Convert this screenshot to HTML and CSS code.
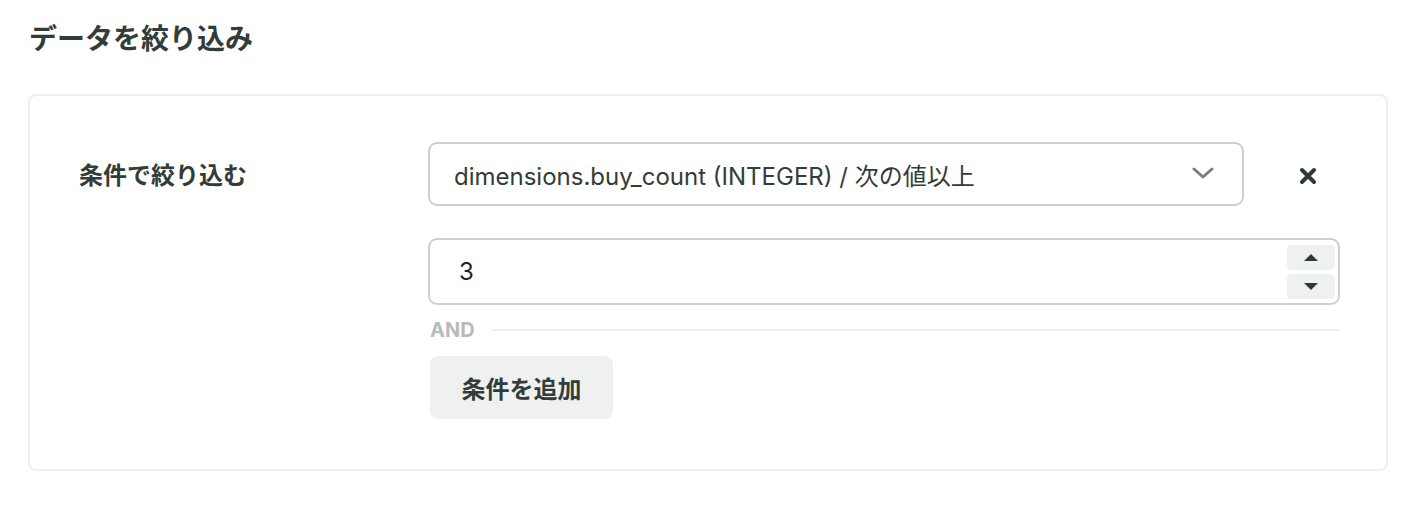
FILE: index.html
```html
<!DOCTYPE html>
<html lang="ja">
<head>
<meta charset="utf-8">
<title>データを絞り込み</title>
<link rel="stylesheet" href="styles.css">
</head>
<body>
<main class="page">
  <h1 class="title">データを絞り込み</h1>
  <section class="card">
    <div class="label">条件で絞り込む</div>
    <div class="content">
      <div class="select-row">
        <div class="select">
          <span class="select-text">dimensions.buy_count (INTEGER) / 次の値以上</span>
          <svg class="chevron" width="22" height="14" viewBox="0 0 22 14"><path d="M2 3 L11 11 L20 3" fill="none" stroke="#7a7f7d" stroke-width="3" stroke-linecap="round" stroke-linejoin="round"/></svg>
        </div>
        <button class="remove" aria-label="削除">
          <svg width="18" height="18" viewBox="0 0 18 18"><path d="M3 3 L15 15 M15 3 L3 15" stroke="#2f3a37" stroke-width="4" stroke-linecap="round"/></svg>
        </button>
      </div>
      <div class="number">
        <span class="number-value">3</span>
        <div class="spin">
          <div class="spin-btn"><svg width="16" height="9" viewBox="0 0 16 9"><path d="M1 8 L8 1 L15 8 Z" fill="#2f3a37"/></svg></div>
          <div class="spin-btn"><svg width="16" height="9" viewBox="0 0 16 9"><path d="M1 1 L8 8 L15 1 Z" fill="#2f3a37"/></svg></div>
        </div>
      </div>
      <div class="and-row">
        <span class="and">AND</span>
        <span class="and-line"></span>
      </div>
      <button class="add">条件を追加</button>
    </div>
  </section>
</main>
</body>
</html>
```

FILE: styles.css
```css
* { box-sizing: border-box; }
html, body { margin: 0; padding: 0; background: #fff; }
body {
  font-family: Inter, "Noto Sans CJK JP", "Noto Sans", sans-serif;
  color: #323c39;
}
.page {
  padding: 18px 30px 0 28px;
}
.title {
  margin: 0 0 34px 1px;
  font-size: 28px;
  line-height: 42px;
  font-weight: 700;
  color: #323c39;
}
.card {
  border: 2px solid #efefef;
  border-radius: 8px;
  padding: 46px 46px 50px 48px;
  display: grid;
  grid-template-columns: 350px 1fr;
}
.label {
  font-size: 24px;
  font-weight: 700;
  line-height: 64px;
  padding: 2px 0 0 1px;
  color: #323c39;
}
.content {
  display: flex;
  flex-direction: column;
}
.select-row {
  display: flex;
  align-items: center;
  gap: 32px;
  height: 64px;
}
.select {
  flex: 1;
  height: 64px;
  border: 2px solid #cfcfcf;
  border-radius: 9px;
  display: flex;
  align-items: center;
  justify-content: space-between;
  padding: 0 28px 0 24px;
  font-size: 24px;
}
.select-text { color: #323c39; }
.chevron { display: block; margin-top: -2px; }
.remove {
  width: 64px;
  height: 64px;
  border: none;
  background: transparent;
  padding: 0;
  display: flex;
  align-items: center;
  justify-content: center;
}
.remove svg { display: block; margin-top: 4px; }
.number {
  margin-top: 32px;
  height: 67px;
  border: 2px solid #cfcfcf;
  border-radius: 9px;
  display: flex;
  align-items: center;
  justify-content: space-between;
  padding: 0 3px 0 29px;
}
.number-value {
  font-size: 24px;
  color: #1f2321;
}
.spin {
  display: flex;
  flex-direction: column;
  gap: 4px;
}
.spin-btn {
  width: 48px;
  height: 25px;
  background: #eff1f0;
  border-radius: 4px;
  display: flex;
  align-items: center;
  justify-content: center;
}
.spin-btn svg { display: block; }
.and-row {
  margin-top: 15px;
  display: flex;
  align-items: center;
  gap: 16px;
  height: 20px;
  padding-left: 2px;
}
.and {
  font-size: 20px;
  font-weight: 700;
  color: #b7bbb9;
}
.and-line {
  flex: 1;
  height: 2px;
  background: #efefef;
}
.add {
  margin-top: 16px;
  margin-left: 2px;
  align-self: flex-start;
  width: 183px;
  height: 63px;
  border: none;
  border-radius: 8px;
  background: #eff1f0;
  font-family: Inter, "Noto Sans CJK JP", sans-serif;
  font-size: 24px;
  font-weight: 700;
  color: #323c39;
  padding: 0;
}
```
